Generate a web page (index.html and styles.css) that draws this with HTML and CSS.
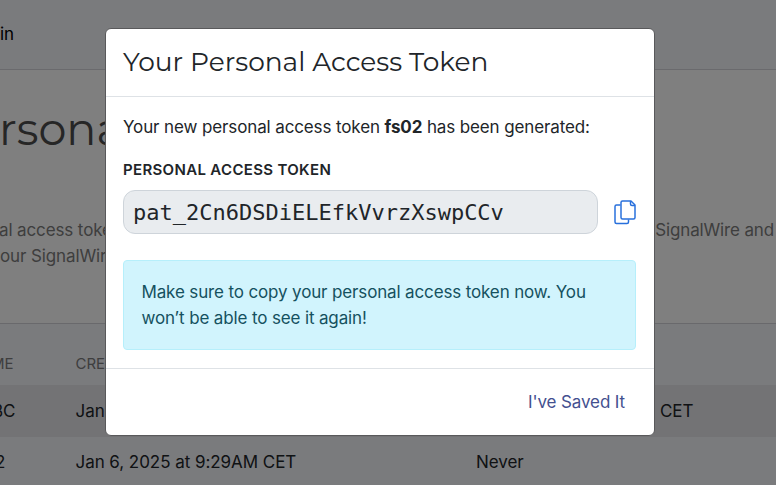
FILE: index.html
```html
<!DOCTYPE html>
<html lang="en">
<head>
<meta charset="utf-8">
<title>Personal Access Tokens</title>
<link rel="stylesheet" href="styles.css">
</head>
<body>
<div class="page">
  <header class="topbar"><span>in</span></header>
  <section class="intro">
    <h1>rsona</h1>
    <div class="lead"><p>al access toke</p><p class="lead-end">SignalWire and</p></div>
    <div class="lead second"><p>our SignalWir</p></div>
  </section>
  <div class="table">
    <div class="row head"><span>ME</span><span>CREATED</span><span></span></div>
    <div class="row odd"><span class="clip">BC</span><span>Jan</span><span class="zone">CET</span></div>
    <div class="row last"><span class="clip two">2</span><span>Jan 6, 2025 at 9:29AM CET</span><span>Never</span></div>
  </div>
</div>
<div class="backdrop">
  <div class="modal">
    <div class="modal-header"><h2>Your Personal Access Token</h2></div>
    <div class="modal-body">
      <p class="message">Your new personal access token <b>fs02</b> has been generated:</p>
      <div class="label">PERSONAL ACCESS TOKEN</div>
      <div class="token-row">
        <div class="token">pat_2Cn6DSDiELEfkVvrzXswpCCv</div>
        <svg class="copy" width="22" height="25" viewBox="0 0 22 25" fill="none" stroke="#2870dc" stroke-width="1.5" stroke-linejoin="round">
          <path d="M6.500 5H2.500Q1 5 1 6.500V22Q1 23.500 2.500 23.500H13Q14.500 23.500 14.500 22V19.500"/>
          <path d="M8.500 1H17L21 5V17.500Q21 19 19.500 19H8.500Q7 19 7 17.500V2.500Q7 1 8.500 1Z"/>
          <path d="M16.500 1V4Q16.500 5.500 18 5.500H21"/>
        </svg>
      </div>
      <div class="alert"><p>Make sure to copy your personal access token now. You</p><p class="alert-second">won’t be able to see it again!</p></div>
    </div>
    <div class="modal-footer"><button>I've Saved It</button></div>
  </div>
</div>
</body>
</html>
```

FILE: styles.css
```css
* { box-sizing: border-box; }
body { margin: 0; width: 776px; height: 485px; overflow: hidden; background: #fff; color: #212529; font: 17px/26px Inter, sans-serif; letter-spacing: -.12px; }
p, h1, h2 { margin: 0; white-space: nowrap; }
.page { height: 485px; overflow: hidden; }
.topbar { height: 70px; padding: 21px 0 0; background: #f5f6fa; border-bottom: 1px solid #d4d5da; color: #000; }
.intro { height: 253px; padding-top: 31px; color: #7c7c7c; }
h1 { height: 116px; margin-left: -1px; color: #4c4c4c; font: 400 44.5px/56px Montserrat, Inter, sans-serif; letter-spacing: 0; }
.lead { display: flex; justify-content: space-between; width: 775px; height: 26px; margin-left: -1px; }
.lead.second { margin-left: 0; }
.lead-end { margin-right: 0; letter-spacing: -.15px; }
.table { height: 162px; border-top: 1px solid #d2d3d8; background: #f5f6fa; }
.row { display: grid; grid-template-columns: 75.5px 400.5px 1fr; height: 51px; align-items: center; letter-spacing: -.05px; }
.row.head { height: 61px; padding-top: 19px; font-size: 15px; color: #7c7c7e; }
.row.head span:first-child { margin-left: -9px; }
.row.odd { height: 52px; background: #e6e7eb; }
.row.last { height: 49px; }
.clip { margin-left: -8px; }
.two { margin-left: -5px; }
.zone { padding-left: 184px; }
.backdrop { position: absolute; inset: 0; display: flex; align-items: flex-start; padding: 28px 0 0 105px; background: rgba(0,0,0,.5); }
.modal { width: 550px; height: 408px; background: #fff; border: 1px solid #59595b; border-radius: 6px; overflow: hidden; }
.modal-header { height: 68px; padding: 13px 17px; border-bottom: 1px solid #dee2e6; }
h2 { font: 400 26.45px/40px Montserrat, Inter, sans-serif; letter-spacing: 0; }
.modal-body { height: 271px; padding: 17px 17px 0; }
.label { margin-top: 17px; font-size: 15px; font-weight: 600; line-height: 26px; letter-spacing: .33px; }
.token-row { display: flex; align-items: center; gap: 16px; margin-top: 7px; }
.token { width: 475px; height: 44px; padding: 0 9px; border: 1px solid #ced4da; border-radius: 12px; background: #e9ecef; font: 22px/43px "DejaVu Sans Mono", monospace; letter-spacing: 0; }
.copy { flex: none; }
.alert { width: 513px; height: 90px; margin-top: 26px; padding: 18px 17.5px; border: 1px solid #b6effb; border-radius: 4px; background: #d1f4fd; color: #155160; letter-spacing: -.14px; }
.modal-footer { height: 67px; padding: 20px 29px; border-top: 1px solid #dee2e6; text-align: right; }
button { padding: 0; border: 0; background: none; color: #43508f; font: 17px/26px Inter, sans-serif; letter-spacing: -.12px; }
```
